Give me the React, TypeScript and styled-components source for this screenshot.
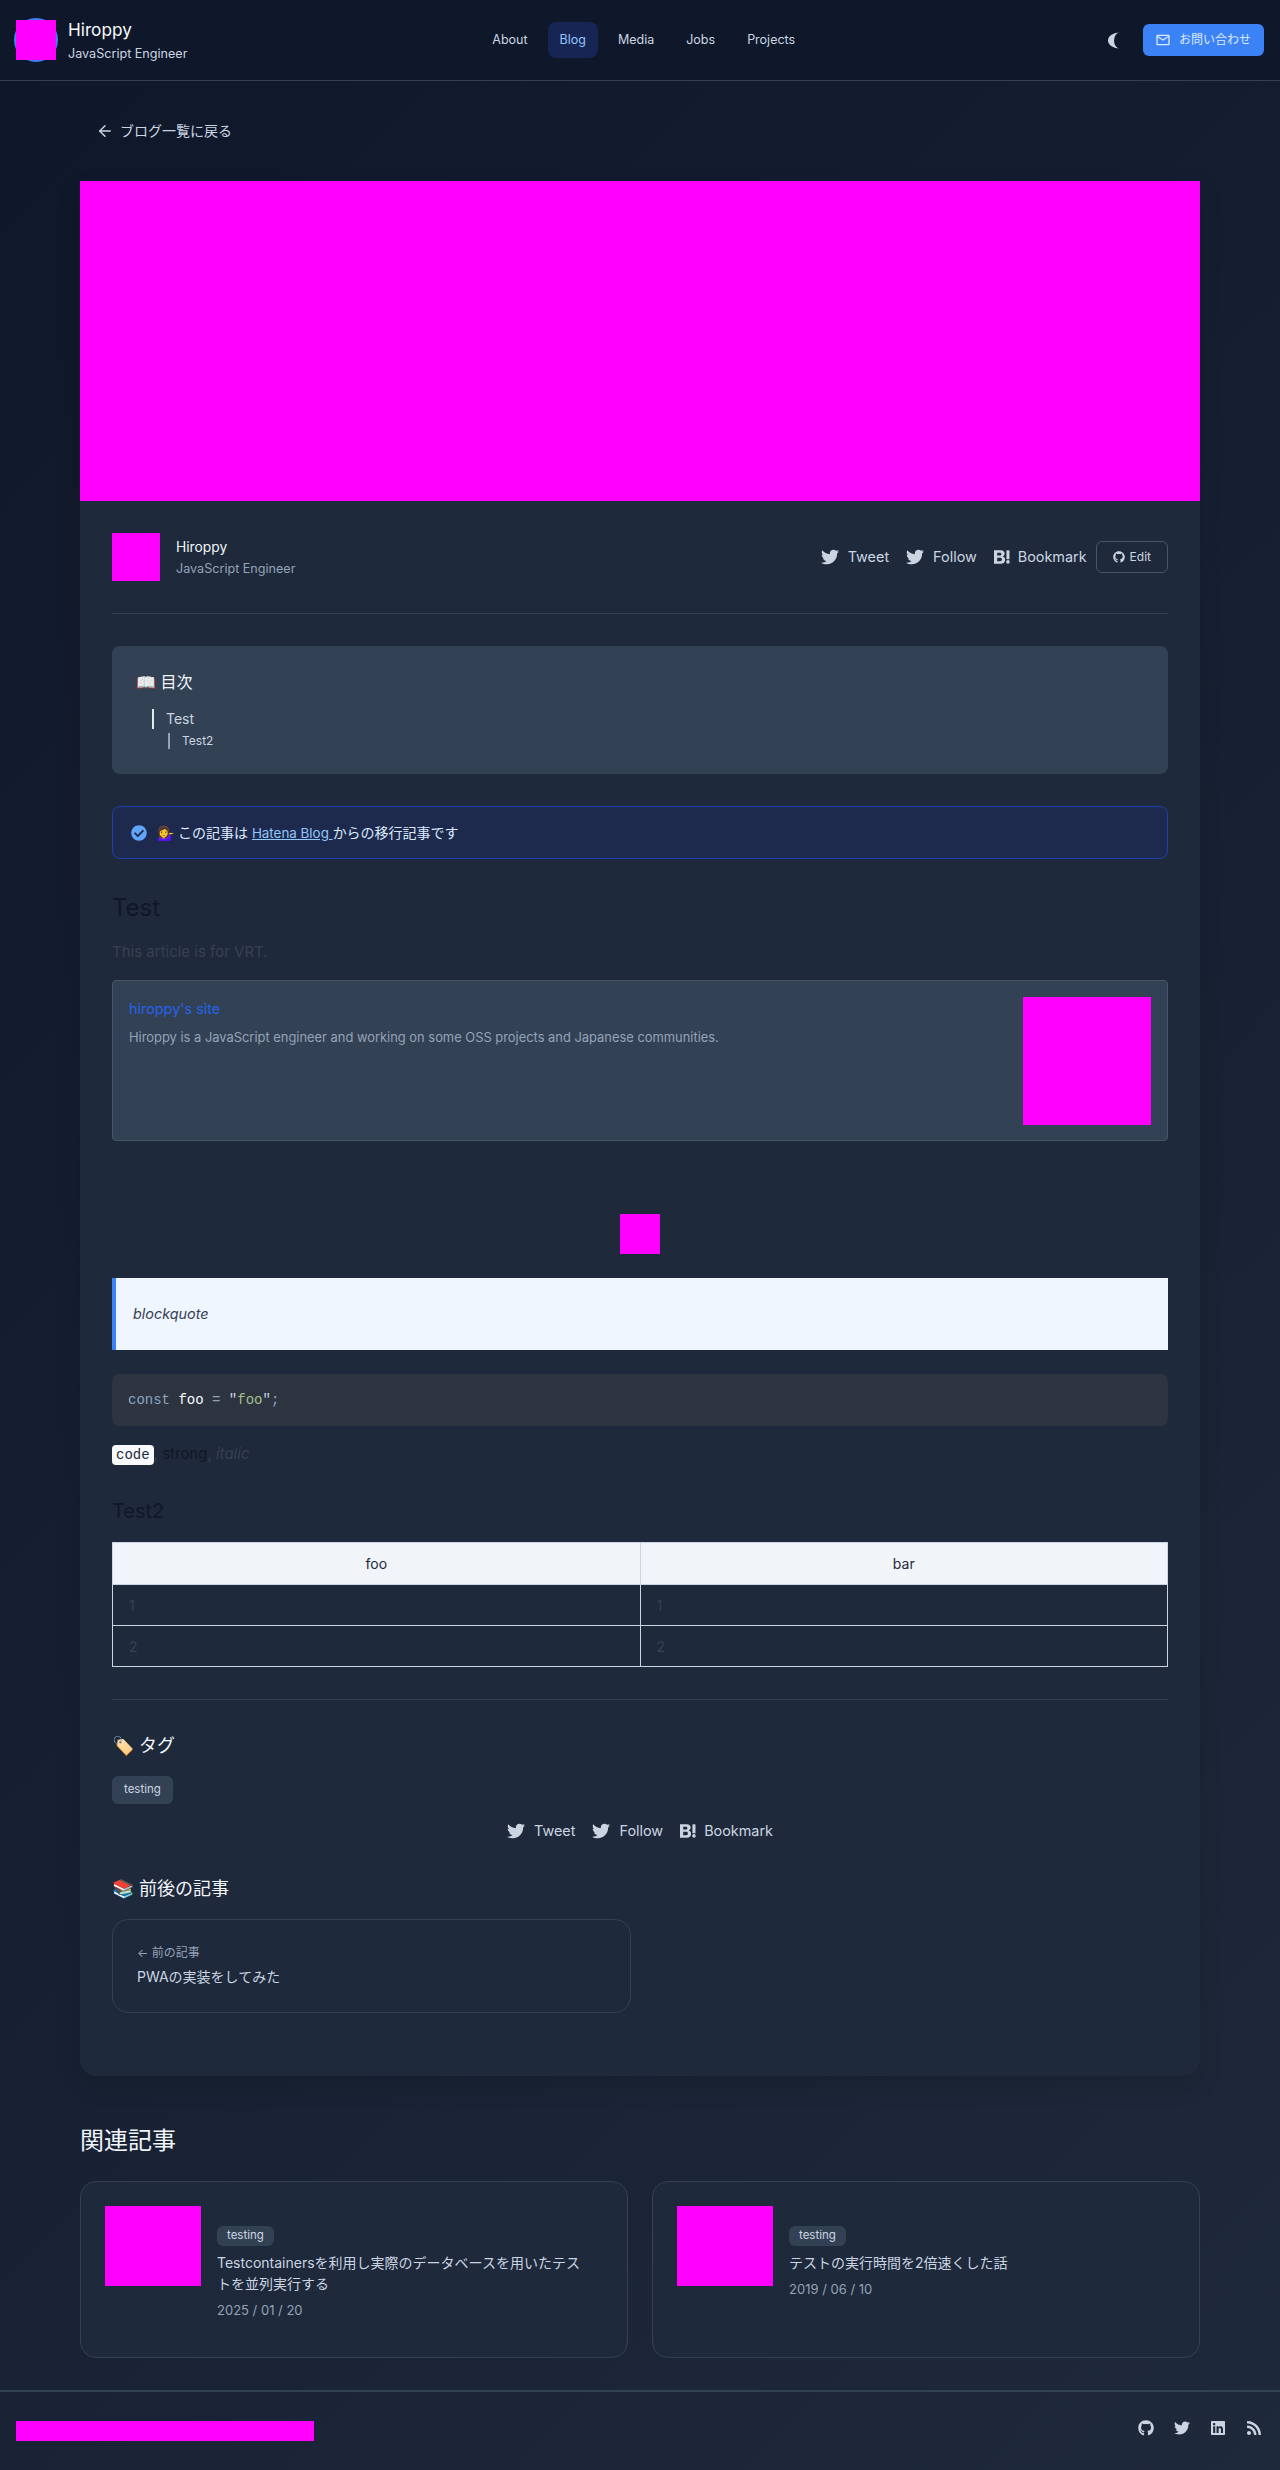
import { createGlobalStyle, styled } from "styled-components";
import { ArrowLeft } from "lucide-react";
import { FaCheckCircle, FaGithub, FaLinkedin, FaRss, FaTwitter } from "react-icons/fa";
import { MdMailOutline } from "react-icons/md";

const GlobalStyle = createGlobalStyle`
    * {
        box-sizing: border-box;
    }

    html,
    body {
        margin: 0;
        padding: 0;
    }

    body {
        font-family: Inter, "Noto Sans CJK JP", sans-serif;
        font-size: 16px;
        line-height: 1.5;
        color: #e2e8f0;
        background: #0f172a;
    }

    a {
        color: inherit;
        text-decoration: none;
    }
`;

const MAGENTA = "#ff00ff";

const Page = styled.div`
    height: 2470px;
    overflow: hidden;
    background: linear-gradient(135deg, #0f172a 0%, #1e293b 100%);
`;

const Header = styled.header`
    height: 81px;
    padding: 0 16px;
    display: flex;
    justify-content: space-between;
    align-items: center;
    background: #0f172a;
    border-bottom: 1px solid #334155;
`;

const Brand = styled.div`
    display: flex;
    align-items: center;
    gap: 10px;
`;

const LogoRing = styled.div`
    width: 44px;
    height: 44px;
    margin-left: -2px;
    border-radius: 50%;
    border: 2px solid #3b82f6;
    position: relative;
`;

const LogoSquare = styled.div`
    position: absolute;
    inset: 0;
    background: ${MAGENTA};
`;

const BrandText = styled.div`
    display: flex;
    flex-direction: column;
`;

const BrandName = styled.span`
    font-size: 17.2px;
    line-height: 28px;
    color: #f8fafc;
`;

const BrandRole = styled.span`
    font-size: 12.6px;
    line-height: 20px;
    color: #cbd5e1;
`;

const Nav = styled.nav`
    margin-right: 8px;
    display: flex;
    gap: 8px;
`;

const NavItem = styled.a<{ $active?: boolean }>`
    padding: 8px 12px;
    border-radius: 8px;
    font-size: 12.5px;
    line-height: 20px;
    color: ${(p) => (p.$active ? "#93c5fd" : "#cbd5e1")};
    background: ${(p) => (p.$active ? "#172554" : "transparent")};
`;

const HeaderActions = styled.div`
    display: flex;
    align-items: center;
    gap: 23px;
`;

const MoonIcon = styled.svg`
    width: 12px;
    height: 17px;
    fill: #cbd5e1;
`;

const ContactButton = styled.a`
    width: 121px;
    height: 32px;
    padding: 0 12px;
    display: flex;
    align-items: center;
    gap: 8px;
    border-radius: 6px;
    background: #3b82f6;
    color: #dbeafe;
    font-size: 12px;
`;

const Main = styled.main`
    width: 1120px;
    margin: 0 auto;
    padding: 32px 0;
`;

const BackLink = styled.a`
    width: fit-content;
    margin-bottom: 32px;
    padding: 8px 16px;
    display: flex;
    align-items: center;
    gap: 6px;
    font-size: 14px;
    line-height: 20px;
    color: #cbd5e1;
`;

const Article = styled.article`
    border-radius: 0 0 16px 16px;
    overflow: hidden;
    background: #1e293b;
    box-shadow: 0 10px 25px rgba(0, 0, 0, 0.12);
`;

const Hero = styled.div`
    height: 320px;
    background: ${MAGENTA};
`;

const ArticleBody = styled.div`
    padding: 32px 32px 63px;
`;

const AuthorRow = styled.div`
    padding-bottom: 32px;
    margin-bottom: 32px;
    display: flex;
    justify-content: space-between;
    align-items: center;
    border-bottom: 1px solid #334155;
`;

const Author = styled.div`
    display: flex;
    align-items: center;
    gap: 16px;
`;

const Avatar = styled.div`
    width: 48px;
    height: 48px;
    background: ${MAGENTA};
`;

const AuthorName = styled.div`
    font-size: 13.8px;
    line-height: 24px;
    color: #f1f5f9;
`;

const AuthorRole = styled.div`
    font-size: 12.6px;
    line-height: 20px;
    color: #94a3b8;
`;

const ShareRow = styled.div<{ $center?: boolean }>`
    display: flex;
    align-items: center;
    gap: 17px;
    justify-content: ${(p) => (p.$center ? "center" : "flex-end")};
    ${(p) => p.$center && "margin: 13px 0 30px; height: 28px;"}
`;

const ShareItem = styled.a`
    display: flex;
    align-items: center;
    gap: 9px;
    font-size: 14.4px;
    line-height: 20px;
    color: #cbd5e1;
`;

const HatenaIcon = styled.svg`
    width: 16px;
    height: 14px;
    margin-right: -1px;
    fill: #cbd5e1;
`;

const EditButton = styled.a`
    height: 32px;
    margin-left: -8px;
    padding: 0 16px;
    display: flex;
    align-items: center;
    gap: 5px;
    border: 1px solid #475569;
    border-radius: 6px;
    font-size: 12px;
    color: #cbd5e1;
`;

const Toc = styled.nav`
    height: 128px;
    margin-bottom: 32px;
    padding: 23px 24px;
    border-radius: 8px;
    background: #334155;
`;

const TocTitle = styled.div`
    margin-bottom: 13px;
    font-size: 16px;
    line-height: 27px;
    color: #f1f5f9;
`;

const TocEntry = styled.div<{ $depth: number }>`
    margin-left: ${(p) => (p.$depth === 1 ? 16 : 32)}px;
    margin-top: ${(p) => (p.$depth === 1 ? 0 : 4)}px;
    padding-left: 12px;
    border-left: 2px solid ${(p) => (p.$depth === 1 ? "#e2e8f0" : "#94a3b8")};
    font-size: ${(p) => (p.$depth === 1 ? 14 : 12)}px;
    line-height: ${(p) => (p.$depth === 1 ? 20 : 16)}px;
    color: #cbd5e1;
`;

const Notice = styled.div`
    height: 53px;
    margin-bottom: 31px;
    padding: 0 18px;
    display: flex;
    align-items: center;
    gap: 10px;
    border: 1px solid #1e40af;
    border-radius: 8px;
    background: #1e2a4d;
    font-size: 14px;
    color: #dbeafe;
`;

const NoticeLink = styled.a`
    color: #93c5fd;
    font-size: 13.4px;
    text-decoration: underline;
`;

const Heading2 = styled.h2`
    margin: 0 0 15px;
    font-size: 24px;
    font-weight: 400;
    line-height: 36px;
    color: #0f172a;
`;

const Paragraph = styled.p`
    margin: 0 0 18px;
    font-size: 15px;
    line-height: 21px;
    color: #374151;
`;

const LinkCard = styled.a`
    height: 161px;
    margin-bottom: 73px;
    padding: 16px;
    display: flex;
    justify-content: space-between;
    border: 1px solid #475569;
    border-radius: 4px;
    background: #334155;
`;

const LinkCardTitle = styled.div`
    margin: 1px 0 9px;
    font-size: 14.4px;
    line-height: 21px;
    color: #2563eb;
`;

const LinkCardText = styled.div`
    font-size: 12.9px;
    line-height: 20px;
    color: #94a3b8;
`;

const LinkCardImage = styled.div`
    width: 128px;
    height: 128px;
    background: ${MAGENTA};
`;

const CenterImage = styled.div`
    width: 40px;
    height: 40px;
    margin: 0 auto 24px;
    background: ${MAGENTA};
`;

const Blockquote = styled.blockquote`
    margin: 0 0 24px;
    padding: 24px 17px;
    border-left: 4px solid #3b82f6;
    background: #eff6ff;
    font-size: 14.4px;
    font-style: italic;
    line-height: 24px;
    color: #374151;
`;

const CodeBlock = styled.pre`
    margin: 0 0 16px;
    padding: 16px;
    border-radius: 8px;
    background: #2d3440;
    font-family: "Liberation Mono", monospace;
    font-size: 14px;
    line-height: 20px;
    color: #f8fafc;
`;

const Token = styled.span<{ $color: string }>`
    color: ${(p) => p.$color};
`;

const InlineRow = styled.p`
    margin: -1px 0 28px;
    font-size: 15px;
    line-height: 26px;
    color: #374151;
`;

const InlineCode = styled.code`
    padding: 2px 4px;
    border-radius: 4px;
    background: #f8fafc;
    font-family: "Liberation Mono", monospace;
    font-size: 14px;
    color: #1e293b;
`;

const Strong = styled.strong`
    font-weight: 400;
    color: #111827;
`;

const Heading3 = styled.h3`
    margin: 0 0 16px;
    font-size: 20px;
    font-weight: 400;
    line-height: 30px;
    color: #0f172a;
`;

const Table = styled.table`
    width: 100%;
    margin-bottom: 32px;
    border-collapse: collapse;
    table-layout: fixed;
    font-size: 14px;
`;

const Th = styled.th`
    height: 42px;
    padding: 0 16px;
    border: 1px solid #cbd5e1;
    background: #f1f5f9;
    font-weight: 400;
    color: #1e293b;
`;

const Td = styled.td`
    height: 41px;
    padding: 0 16px;
    border: 1px solid #cbd5e1;
    color: #374151;
`;

const Divider = styled.hr`
    margin: 0 0 32px;
    border: 0;
    border-top: 1px solid #334155;
`;

const SectionTitle = styled.h3`
    margin: 0 0 17px;
    font-size: 18px;
    font-weight: 400;
    line-height: 27px;
    color: #f1f5f9;
`;

const Tag = styled.span<{ $small?: boolean }>`
    display: flex;
    align-items: center;
    width: fit-content;
    height: ${(p) => (p.$small ? 20 : 28)}px;
    padding: 0 ${(p) => (p.$small ? 10 : 12)}px;
    border-radius: 6px;
    background: #334155;
    font-size: 11.5px;
    color: #cbd5e1;
`;

const PrevCard = styled.a`
    display: block;
    width: 519px;
    height: 94px;
    padding: 24px;
    border: 1px solid #334155;
    border-radius: 16px;
`;

const PrevLabel = styled.div`
    margin-bottom: 4px;
    font-size: 12px;
    line-height: 18px;
    color: #94a3b8;
`;

const PrevTitle = styled.div`
    font-size: 14px;
    line-height: 21px;
    color: #cbd5e1;
`;

const RelatedHeading = styled.h2`
    margin: 47px 0 22px;
    font-size: 24px;
    font-weight: 400;
    line-height: 36px;
    color: #f1f5f9;
`;

const RelatedGrid = styled.div`
    display: grid;
    grid-template-columns: 1fr 1fr;
    gap: 24px;
`;

const RelatedCard = styled.a`
    height: 177px;
    padding: 24px;
    display: flex;
    gap: 16px;
    border: 1px solid #334155;
    border-radius: 16px;
    background: #1e293b;
`;

const RelatedImage = styled.div`
    flex: none;
    width: 96px;
    height: 80px;
    background: ${MAGENTA};
`;

const RelatedText = styled.div`
    padding: 20px 16px 0 0;
`;

const RelatedTitle = styled.div`
    margin: 6px 0 7px;
    font-size: 14px;
    line-height: 21px;
    color: #cbd5e1;
`;

const RelatedDate = styled.div`
    font-size: 13px;
    line-height: 18px;
    color: #94a3b8;
`;

const Footer = styled.footer`
    height: 80px;
    padding: 0 16px;
    display: flex;
    justify-content: space-between;
    align-items: center;
    border-top: 2px solid #334155;
`;

const FooterBar = styled.div`
    width: 298px;
    height: 20px;
    background: ${MAGENTA};
`;

const FooterIcons = styled.div`
    margin: 0 2px 6px 0;
    display: flex;
    gap: 20px;
    font-size: 16px;
    color: #cbd5e1;
`;

function ShareLinks() {
    return (
        <>
            <ShareItem>
                <FaTwitter size={18} />
                Tweet
            </ShareItem>
            <ShareItem>
                <FaTwitter size={18} />
                Follow
            </ShareItem>
            <ShareItem>
                <HatenaIcon viewBox="0 0 18 15">
                    <path
                        fillRule="evenodd"
                        d="M0 0H7.5C10.5 0 12 1.5 12 3.7C12 5.3 11 6.4 9.8 6.9C11.5 7.3 12.5 8.6 12.5 10.5C12.5 13.2 10.6 15 7.7 15H0ZM3.6 2.8V5.8H6.3C7.6 5.8 8.3 5.2 8.3 4.3C8.3 3.4 7.6 2.8 6.3 2.8ZM3.6 8.4V12.2H6.8C8.2 12.2 8.9 11.5 8.9 10.3C8.9 9.1 8.2 8.4 6.8 8.4Z"
                    />
                    <rect x="14" y="0" width="3.4" height="10" />
                    <circle cx="15.7" cy="13" r="2" />
                </HatenaIcon>
                Bookmark
            </ShareItem>
        </>
    );
}

const related = [
    {
        title: "Testcontainersを利用し実際のデータベースを用いたテストを並列実行する",
        date: "2025 / 01 / 20",
    },
    { title: "テストの実行時間を2倍速くした話", date: "2019 / 06 / 10" },
];

function App() {
    return (
        <Page>
            <GlobalStyle />
            <Header>
                <Brand>
                    <LogoRing>
                        <LogoSquare />
                    </LogoRing>
                    <BrandText>
                        <BrandName>Hiroppy</BrandName>
                        <BrandRole>JavaScript Engineer</BrandRole>
                    </BrandText>
                </Brand>
                <Nav>
                    <NavItem>About</NavItem>
                    <NavItem $active>Blog</NavItem>
                    <NavItem>Media</NavItem>
                    <NavItem>Jobs</NavItem>
                    <NavItem>Projects</NavItem>
                </Nav>
                <HeaderActions>
                    <MoonIcon viewBox="0 0 12 17">
                        <path d="M12 .5A12 8 0 0 0 12 16.5A6 8 0 0 1 12 .5Z" />
                    </MoonIcon>
                    <ContactButton>
                        <MdMailOutline size={16} />
                        お問い合わせ
                    </ContactButton>
                </HeaderActions>
            </Header>
            <Main>
                <BackLink>
                    <ArrowLeft size={18} strokeWidth={2} />
                    ブログ一覧に戻る
                </BackLink>
                <Article>
                    <Hero />
                    <ArticleBody>
                        <AuthorRow>
                            <Author>
                                <Avatar />
                                <div>
                                    <AuthorName>Hiroppy</AuthorName>
                                    <AuthorRole>JavaScript Engineer</AuthorRole>
                                </div>
                            </Author>
                            <ShareRow>
                                <ShareLinks />
                                <EditButton>
                                    <FaGithub size={12} />
                                    Edit
                                </EditButton>
                            </ShareRow>
                        </AuthorRow>
                        <Toc>
                            <TocTitle>📖 目次</TocTitle>
                            <TocEntry $depth={1}>Test</TocEntry>
                            <TocEntry $depth={2}>Test2</TocEntry>
                        </Toc>
                        <Notice>
                            <FaCheckCircle size={16} color="#60a5fa" />
                            <span>
                                💁‍♀️ この記事は <NoticeLink>Hatena Blog </NoticeLink>からの移行記事です
                            </span>
                        </Notice>
                        <Heading2>Test</Heading2>
                        <Paragraph>This article is for VRT.</Paragraph>
                        <LinkCard>
                            <div>
                                <LinkCardTitle>hiroppy's site</LinkCardTitle>
                                <LinkCardText>
                                    Hiroppy is a JavaScript engineer and working on some OSS projects and Japanese communities.
                                </LinkCardText>
                            </div>
                            <LinkCardImage />
                        </LinkCard>
                        <CenterImage />
                        <Blockquote>blockquote</Blockquote>
                        <CodeBlock>
                            <Token $color="#8aa4c4">const</Token> foo <Token $color="#94a3b8">=</Token>{" "}
                            <Token $color="#cbd5e1">"</Token>
                            <Token $color="#a3be8c">foo</Token>
                            <Token $color="#cbd5e1">"</Token>
                            <Token $color="#94a3b8">;</Token>
                        </CodeBlock>
                        <InlineRow>
                            <InlineCode>code</InlineCode>, <Strong>strong</Strong>, <em>italic</em>
                        </InlineRow>
                        <Heading3>Test2</Heading3>
                        <Table>
                            <thead>
                                <tr>
                                    <Th>foo</Th>
                                    <Th>bar</Th>
                                </tr>
                            </thead>
                            <tbody>
                                <tr>
                                    <Td>1</Td>
                                    <Td>1</Td>
                                </tr>
                                <tr>
                                    <Td>2</Td>
                                    <Td>2</Td>
                                </tr>
                            </tbody>
                        </Table>
                        <Divider />
                        <SectionTitle>🏷️ タグ</SectionTitle>
                        <Tag>testing</Tag>
                        <ShareRow $center>
                            <ShareLinks />
                        </ShareRow>
                        <SectionTitle>📚 前後の記事</SectionTitle>
                        <PrevCard>
                            <PrevLabel>← 前の記事</PrevLabel>
                            <PrevTitle>PWAの実装をしてみた</PrevTitle>
                        </PrevCard>
                    </ArticleBody>
                </Article>
                <RelatedHeading>関連記事</RelatedHeading>
                <RelatedGrid>
                    {related.map((item) => (
                        <RelatedCard key={item.date}>
                            <RelatedImage />
                            <RelatedText>
                                <Tag $small>testing</Tag>
                                <RelatedTitle>{item.title}</RelatedTitle>
                                <RelatedDate>{item.date}</RelatedDate>
                            </RelatedText>
                        </RelatedCard>
                    ))}
                </RelatedGrid>
            </Main>
            <Footer>
                <FooterBar />
                <FooterIcons>
                    <FaGithub />
                    <FaTwitter />
                    <FaLinkedin />
                    <FaRss />
                </FooterIcons>
            </Footer>
        </Page>
    );
}

export default App;
